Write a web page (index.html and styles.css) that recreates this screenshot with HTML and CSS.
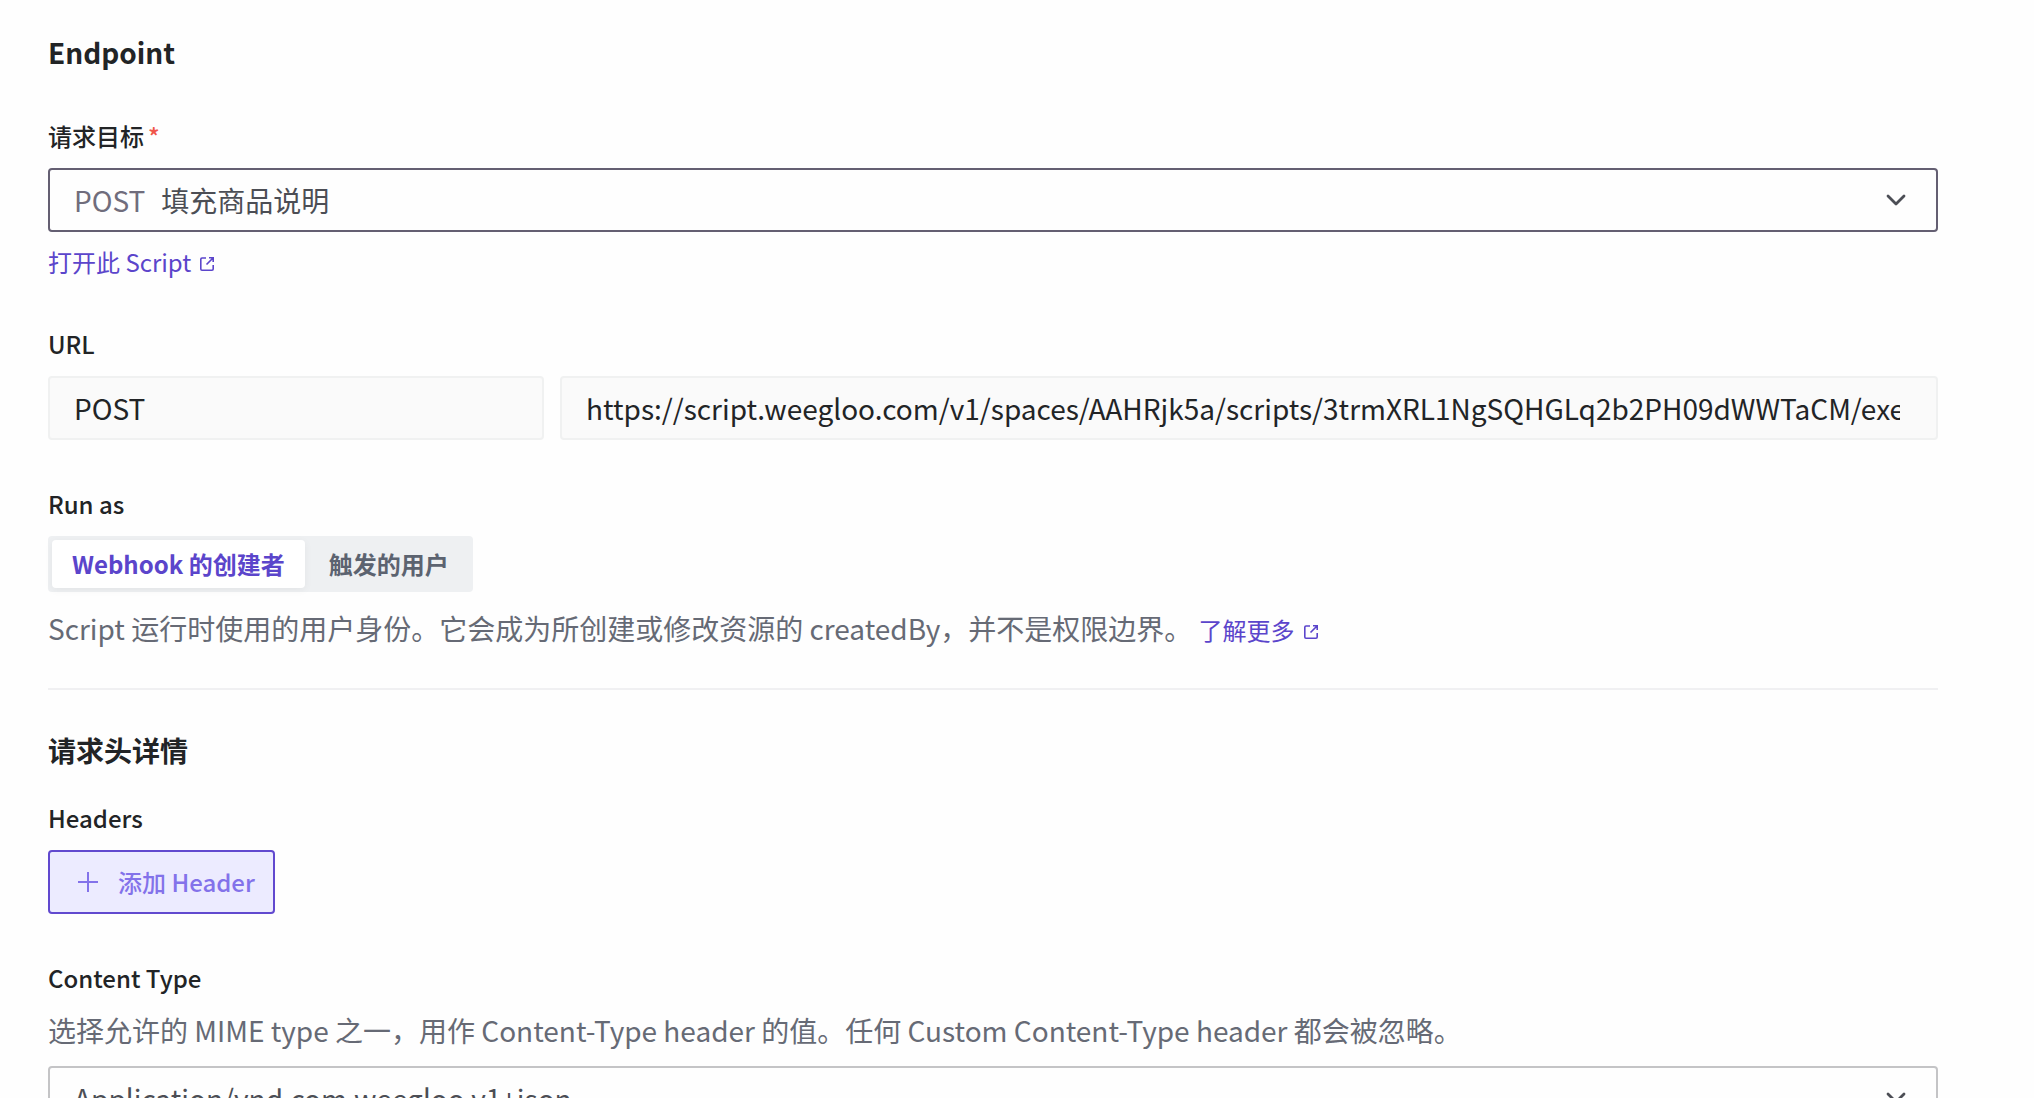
FILE: index.html
```html
<!DOCTYPE html>
<html lang="zh-CN">
<head>
  <meta charset="utf-8">
  <meta name="viewport" content="width=device-width, initial-scale=1">
  <title>Webhook</title>
  <link rel="stylesheet" href="styles.css">
</head>
<body>
  <svg class="sprite" aria-hidden="true">
    <symbol id="external" viewBox="0 0 16 16">
      <path d="M7 2H3a1.200 1.200 0 0 0-1.200 1.200V13A1.200 1.200 0 0 0 3 14.200h10a1.200 1.200 0 0 0 1.200-1.200V9M10 1.800h4.200V6M14 2 7.500 8.500" fill="none" stroke="currentColor" stroke-width="1.600"/>
    </symbol>
    <symbol id="chevron" viewBox="0 0 24 24">
      <path d="m4 8 8 8 8-8" fill="none" stroke="currentColor" stroke-width="2.800" stroke-linecap="round" stroke-linejoin="round"/>
    </symbol>
  </svg>

  <main class="form">
    <section class="section">
      <h2 class="heading">Endpoint</h2>

      <div class="field">
        <label class="label" for="target">请求目标<span class="required">*</span></label>
        <div class="select select-active">
          <span class="method">POST</span>
          <select class="select-input" id="target">
            <option>填充商品说明</option>
          </select>
          <svg class="chevron"><use href="#chevron"/></svg>
        </div>
        <a class="link link-block" href="#script">打开此 Script<svg class="external"><use href="#external"/></svg></a>
      </div>

      <div class="field">
        <label class="label" for="url">URL</label>
        <div class="url-row">
          <input class="readonly" type="text" value="POST" aria-label="Method" readonly>
          <input class="readonly" id="url" type="text" value="https://script.weegloo.com/v1/spaces/AAHRjk5a/scripts/3trmXRL1NgSQHGLq2b2PH09dWWTaCM/execute" readonly>
        </div>
      </div>

      <div class="field">
        <span class="label" id="run-as">Run as</span>
        <div class="segments" role="group" aria-labelledby="run-as">
          <button class="segment segment-on" type="button" aria-pressed="true">Webhook 的创建者</button>
          <button class="segment" type="button" aria-pressed="false">触发的用户</button>
        </div>
        <p class="help help-below">Script 运行时使用的用户身份。它会成为所创建或修改资源的 createdBy，并不是权限边界。 <a class="link" href="#more">了解更多<svg class="external"><use href="#external"/></svg></a></p>
      </div>
    </section>

    <section class="section section-divided">
      <h2 class="heading">请求头详情</h2>

      <div class="field field-headers">
        <span class="label">Headers</span>
        <button class="add" type="button">
          <svg class="plus" viewBox="0 0 24 24"><path d="M12 2v20M2 12h20" stroke="currentColor" stroke-width="2"/></svg>
          添加 Header
        </button>
      </div>

      <div class="field">
        <label class="label" for="content-type">Content Type</label>
        <p class="help">选择允许的 MIME type 之一，用作 Content-Type header 的值。任何 Custom Content-Type header 都会被忽略。</p>
        <div class="select select-below">
          <select class="select-input" id="content-type">
            <option>Application/vnd.com.weegloo.v1+json</option>
          </select>
          <svg class="chevron"><use href="#chevron"/></svg>
        </div>
      </div>
    </section>
  </main>
</body>
</html>
```
FILE: styles.css
```css
* {
  box-sizing: border-box;
}

body {
  margin: 0;
  background: #fefefe;
  color: #222426;
  font-family: "Noto Sans CJK SC", sans-serif;
  font-size: 28px;
  line-height: 40px;
}

button,
input,
select {
  font: inherit;
  color: inherit;
}

.sprite {
  display: none;
}

.form {
  padding: 32px 96px 32px 48px;
}

.section-divided {
  margin-top: 40px;
  padding-top: 40px;
  border-top: 2px solid #f0f0f2;
}

.heading {
  margin: 0;
  font-size: 28px;
  font-weight: 700;
}

.field {
  margin-top: 44px;
}

.field-headers {
  margin-top: 28px;
}

.label {
  display: block;
  margin-bottom: 12px;
  font-size: 24px;
  font-weight: 500;
}

.required {
  margin-left: 4px;
  color: #f0564a;
}

.select {
  display: flex;
  align-items: center;
  height: 64px;
  padding: 0 28px 0 24px;
  border: 2px solid #c4c4c6;
  border-radius: 4px;
  color: #4c4e55;
}

.select-active {
  border-color: #645f72;
}

.select-below {
  margin-top: 16px;
}

.method {
  margin-right: 16px;
  color: #706d7c;
}

.select-input {
  flex: 1;
  min-width: 0;
  height: 100%;
  padding: 0;
  border: 0;
  background: none;
  appearance: none;
}

.chevron {
  width: 24px;
  height: 24px;
}

.link {
  color: #5b45cb;
  font-size: 24px;
  line-height: 24px;
  text-decoration: none;
}

.link-block {
  display: block;
  width: max-content;
  margin-top: 12px;
  line-height: 36px;
}

.external {
  width: 16px;
  height: 16px;
  margin-left: 8px;
  vertical-align: baseline;
}

.url-row {
  display: grid;
  grid-template-columns: 9fr 25fr;
  gap: 16px;
}

.readonly {
  min-width: 0;
  width: 100%;
  height: 64px;
  padding: 0 36px 0 24px;
  border: 2px solid #f0f1f1;
  border-radius: 4px;
  background: #fafafa;
}

.segments {
  display: flex;
  gap: 4px;
  width: max-content;
  padding: 4px;
  border-radius: 4px;
  background: #eef0f2;
}

.segment {
  height: 48px;
  padding: 0 20px;
  border: 0;
  border-radius: 4px;
  background: none;
  color: #5c6370;
  font-size: 24px;
  font-weight: 700;
}

.segment-on {
  background: #fff;
  color: #5b45cb;
  box-shadow: 0 2px 8px rgb(0 0 0 / 5%);
}

.help {
  margin: 0;
  color: #666a75;
}

.help-below {
  margin-top: 16px;
}

.add {
  display: flex;
  align-items: center;
  gap: 18px;
  height: 64px;
  padding: 0 18px 0 26px;
  border: 2px solid #6149cf;
  border-radius: 4px;
  background: #ecebff;
  color: #8372ea;
  font-size: 24px;
  font-weight: 500;
}

.plus {
  width: 24px;
  height: 24px;
}
```
